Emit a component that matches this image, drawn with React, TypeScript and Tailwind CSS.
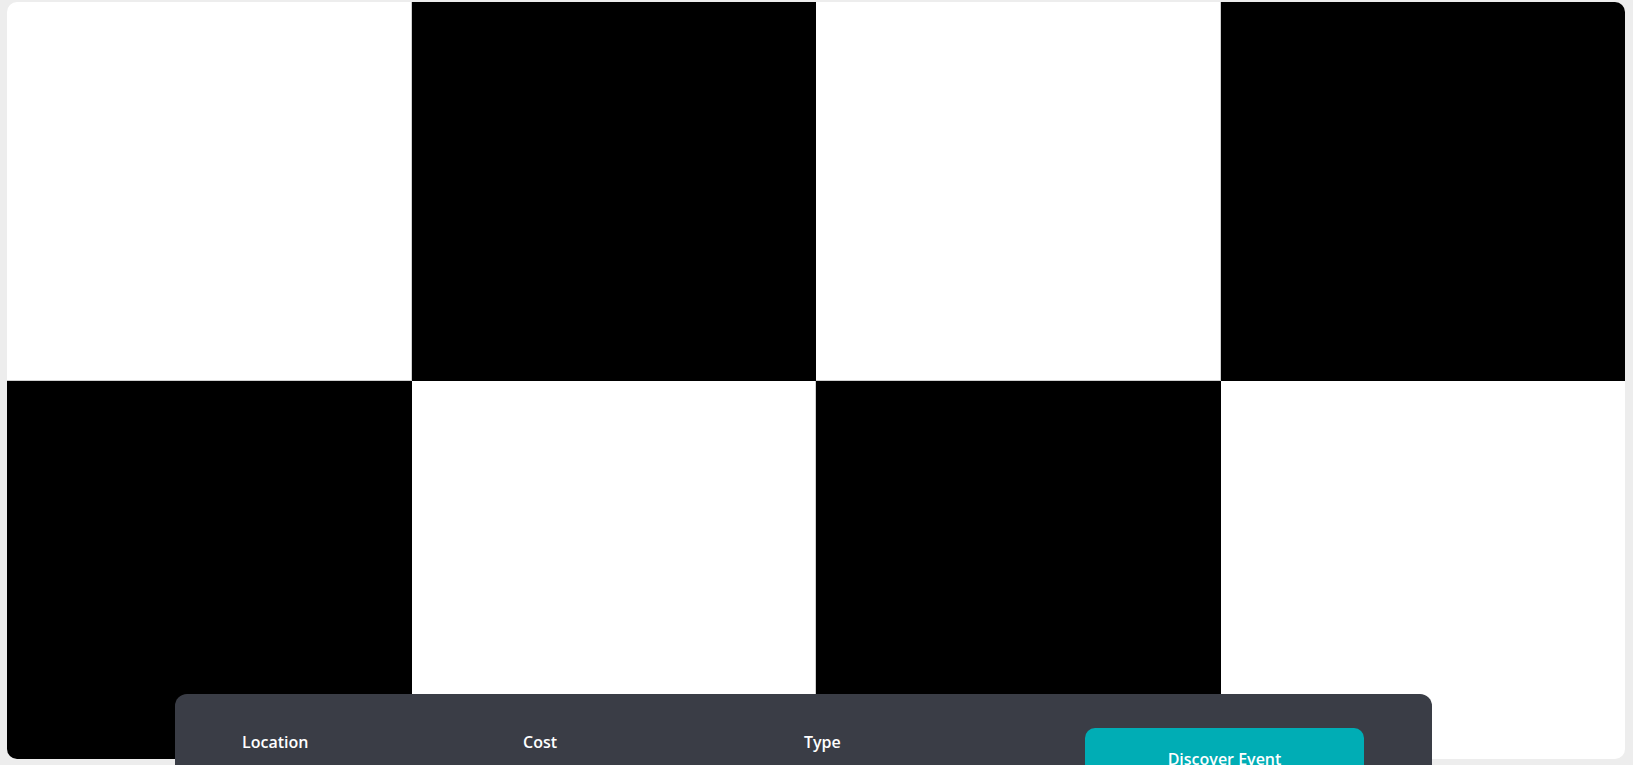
const tiles = [
  "bg-white border-r border-b border-[#cfcfcf]",
  "bg-black",
  "bg-white border-r border-b border-[#cfcfcf]",
  "bg-black",
  "bg-black",
  "bg-white border-r border-[#cfcfcf]",
  "bg-black",
  "bg-white",
];

const filters = [
  { label: "Location", value: "Select location" },
  { label: "Cost", value: "Select cost" },
  { label: "Type", value: "Select type" },
];

export default function App() {
  return (
    <div
      className="relative min-h-screen bg-[#ededed] pl-[7px] pt-[2px] pb-[6px]"
      style={{ fontFamily: '"Open Sans", "Inter", sans-serif' }}
    >
      {/* Hero grid */}
      <div className="grid h-[757px] w-[1618px] grid-cols-4 grid-rows-2 overflow-hidden rounded-[10px]">
        {tiles.map((t, i) => (
          <div key={i} className={t} />
        ))}
      </div>

      {/* Search panel */}
      <div className="absolute left-[175px] top-[694px] w-[1257px] rounded-xl bg-[#3a3d46] px-[67px] pt-[34px] pb-10">
        <div className="grid grid-cols-[281px_281px_281px_279px]">
          {filters.map((f) => (
            <div key={f.label} className="mt-[2px]">
              <p className="text-[16px] leading-6 font-semibold text-white">{f.label}</p>
              <p className="mt-3 text-sm text-gray-400">{f.value}</p>
            </div>
          ))}
          <button className="h-[62px] w-[279px] rounded-[10px] bg-[#00adb5] text-[16px] font-semibold text-white">
            Discover Event
          </button>
        </div>
      </div>
    </div>
  );
}
